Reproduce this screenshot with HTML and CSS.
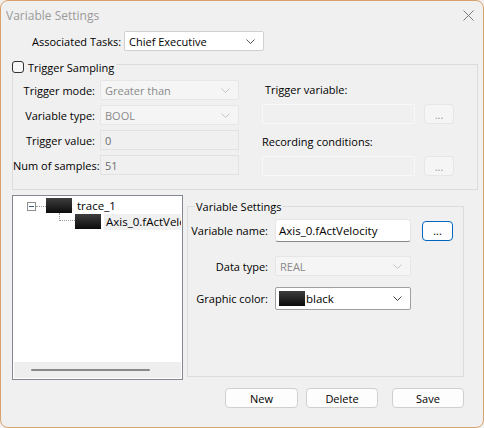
FILE: index.html
```html
<!DOCTYPE html>
<html>
<head>
<meta charset="utf-8">
<title>Variable Settings</title>
<link rel="stylesheet" href="styles.css">
</head>
<body>
<div class="window">
  <div class="titlebar">
    <span class="title">Variable Settings</span>
    <svg class="close" width="11" height="11" viewBox="0 0 11 11"><path d="M0.5 0.5L10.5 10.5M10.5 0.5L0.5 10.5" stroke="#7a7a7a" stroke-width="1" fill="none"/></svg>
  </div>

  <div class="assoc">
    <span class="assoc-label">Associated Tasks:</span>
    <div class="select task-select">
      <span>Chief Executive</span>
      <svg class="chev" width="9" height="5" viewBox="0 0 9 5"><path d="M0.5 0.5L4.5 4.5L8.5 0.5" stroke="#555" fill="none"/></svg>
    </div>
  </div>

  <fieldset class="group trigger">
    <legend><span class="legend-inner"><span class="checkbox"></span>Trigger Sampling</span></legend>
    <div class="trigger-body">
      <div class="form-grid">
        <span class="lbl">Trigger mode:</span>
        <div class="select disabled"><span>Greater than</span><svg class="chev" width="9" height="5" viewBox="0 0 9 5"><path d="M0.5 0.5L4.5 4.5L8.5 0.5" stroke="#c4c4c4" fill="none"/></svg></div>
        <span class="lbl">Variable type:</span>
        <div class="select disabled"><span>BOOL</span><svg class="chev" width="9" height="5" viewBox="0 0 9 5"><path d="M0.5 0.5L4.5 4.5L8.5 0.5" stroke="#c4c4c4" fill="none"/></svg></div>
        <span class="lbl">Trigger value:</span>
        <div class="input disabled">0</div>
        <span class="lbl">Num of samples:</span>
        <div class="input disabled">51</div>
      </div>
      <div class="side">
        <div class="side-label first">Trigger variable:</div>
        <div class="browse-row">
          <div class="input side-input"></div>
          <div class="dots disabled">...</div>
        </div>
        <div class="side-label">Recording conditions:</div>
        <div class="browse-row">
          <div class="input side-input"></div>
          <div class="dots disabled">...</div>
        </div>
      </div>
    </div>
  </fieldset>

  <div class="lower">
    <div class="tree">
      <div class="tree-list">
        <div class="tree-row root">
          <span class="expander"><span class="minus"></span></span>
          <span class="hline"></span>
          <span class="swatch"></span>
          <span class="node-text">trace_1</span>
        </div>
        <div class="tree-row child">
          <span class="elbow"></span>
          <span class="swatch"></span>
          <span class="node-text selected">Axis_0.fActVelocity</span>
        </div>
      </div>
      <div class="hscroll"><span class="thumb"></span></div>
    </div>

    <fieldset class="group varset">
      <legend class="var-legend">Variable Settings</legend>
      <div class="vrow row-name">
        <span class="vlbl">Variable name:</span>
        <div class="text-input">Axis_0.fActVelocity</div>
        <div class="dots focused">...</div>
      </div>
      <div class="vrow row-type">
        <span class="vlbl">Data type:</span>
        <div class="select disabled vselect"><span>REAL</span><svg class="chev" width="9" height="5" viewBox="0 0 9 5"><path d="M0.5 0.5L4.5 4.5L8.5 0.5" stroke="#c4c4c4" fill="none"/></svg></div>
      </div>
      <div class="vrow row-color">
        <span class="vlbl">Graphic color:</span>
        <div class="select color-select">
          <span class="color-val"><span class="swatch"></span>black</span>
          <svg class="chev" width="9" height="5" viewBox="0 0 9 5"><path d="M0.5 0.5L4.5 4.5L8.5 0.5" stroke="#444" fill="none"/></svg>
        </div>
      </div>
    </fieldset>
  </div>

  <div class="actions">
    <button class="btn btn-new">New</button>
    <button class="btn btn-delete">Delete</button>
    <button class="btn btn-save">Save</button>
  </div>
</div>
</body>
</html>
```

FILE: styles.css
```css
html, body {
  margin: 0;
  padding: 0;
  background: #f0f0f0;
}
body {
  font-family: "Open Sans", "Noto Sans", sans-serif;
  font-size: 11px;
  color: #000;
}
.window {
  width: 484px;
  height: 428px;
  box-sizing: border-box;
  border: 1px solid #d9a26c;
  border-radius: 8px;
  background: #f0f0f0;
  display: flex;
  flex-direction: column;
  overflow: hidden;
}
.titlebar {
  height: 28px;
  display: flex;
  align-items: center;
  justify-content: space-between;
  padding: 0 9px 0 5px;
  flex: none;
}
.title {
  font-size: 12px;
  color: #9b9b9b;
}
.assoc {
  display: flex;
  align-items: center;
  height: 20px;
  margin-top: 2px;
  padding-left: 31px;
  flex: none;
}
.assoc-label {
  width: 86px;
  text-align: right;
  white-space: nowrap;
  margin-right: 6px;
}
.select {
  box-sizing: border-box;
  height: 20px;
  display: flex;
  align-items: center;
  justify-content: space-between;
  padding: 0 8px 0 4px;
  background: #fff;
  border: 1px solid #d0d0d0;
  border-radius: 2px;
  white-space: nowrap;
}
.task-select {
  width: 140px;
}
.select.disabled {
  background: #f5f5f5;
  border-color: #e6e6e6;
  color: #8a8a8a;
}
.chev {
  flex: none;
  display: block;
}
.group {
  border: 1px solid #dcdcdc;
  min-width: 0;
  margin: 0;
}
.trigger {
  margin: 5px 5px 0 11px;
  padding: 7px 0 13px 0;
  flex: none;
}
.trigger legend {
  padding: 5px 2px 0 0;
  margin-left: -1px;
}
.legend-inner {
  display: flex;
  align-items: center;
  height: 12px;
  gap: 4px;
}
.checkbox {
  width: 12px;
  height: 12px;
  box-sizing: border-box;
  border: 1px solid #333;
  border-radius: 3px;
  background: #f7f7f7;
}
.trigger-body {
  display: flex;
  align-items: flex-start;
}
.form-grid {
  display: grid;
  grid-template-columns: 82px 139px;
  grid-auto-rows: 20px;
  column-gap: 5px;
  row-gap: 5px;
}
.lbl {
  text-align: right;
  align-self: center;
  white-space: nowrap;
}
.input {
  box-sizing: border-box;
  height: 20px;
  display: flex;
  align-items: center;
  padding: 0 4px;
}
.input.disabled {
  background: #f0f0f0;
  border: 1px solid #e2e2e2;
  color: #6d6d6d;
}
.side {
  margin-left: 23px;
  width: 192px;
  padding-top: 3px;
}
.side-label {
  line-height: 14px;
  margin: 11px 0 7px 0;
  white-space: nowrap;
}
.side-label.first {
  margin-top: 0;
  padding-left: 3px;
}
.browse-row {
  display: flex;
  align-items: center;
}
.side-input {
  width: 153px;
  background: #f0f0f0;
  border: 1px solid #f8f8f8;
}
.dots {
  box-sizing: border-box;
  width: 30px;
  height: 20px;
  margin-left: 9px;
  border-radius: 4px;
  display: flex;
  align-items: center;
  justify-content: center;
  line-height: 1;
}
.dots.disabled {
  background: #f5f5f5;
  border: 1px solid #e6e6e6;
  color: #9a9a9a;
}
.dots.focused {
  width: 31px;
  margin-left: 11px;
  background: #fdfdfd;
  border: 1px solid #0067c0;
}

/* lower part */
.lower {
  display: flex;
  align-items: flex-start;
  margin: 5px 0 0 11px;
  flex: none;
}
.tree {
  width: 171px;
  height: 185px;
  box-sizing: border-box;
  border: 1px solid #828790;
  background: #fff;
  padding: 1px;
  display: flex;
  flex-direction: column;
  flex: none;
}
.tree-list {
  flex: 1;
  padding-top: 1px;
  overflow: hidden;
}
.tree-row {
  display: flex;
  align-items: flex-start;
  height: 16px;
}
.root {
  padding-left: 13px;
}
.expander {
  width: 9px;
  height: 9px;
  box-sizing: border-box;
  border: 1px solid #8e8e8e;
  margin-top: 4px;
  display: flex;
  align-items: center;
  justify-content: center;
  flex: none;
}
.minus {
  width: 5px;
  height: 1px;
  background: #3c5a8c;
}
.hline {
  width: 10px;
  margin-top: 8px;
  border-top: 1px dotted #9a9a9a;
  flex: none;
}
.swatch {
  width: 26px;
  height: 15px;
  background: linear-gradient(#3e3e3e, #0c0c0c);
  flex: none;
}
.node-text {
  line-height: 16px;
  margin-left: 5px;
  white-space: nowrap;
  font-size: 11.5px;
}
.child {
  padding-left: 45px;
}
.elbow {
  width: 16px;
  height: 8px;
  box-sizing: border-box;
  margin-top: -1px;
  border-left: 1px dotted #9a9a9a;
  border-bottom: 1px dotted #9a9a9a;
  flex: none;
}
.node-text.selected {
  margin-left: 3px;
  padding-left: 2px;
  background: #f0f0f0;
  flex: 1;
  min-width: 0;
  overflow: hidden;
}
.hscroll {
  height: 16px;
  background: #eeeeee;
  display: flex;
  align-items: center;
  flex: none;
}
.thumb {
  width: 119px;
  height: 2px;
  margin-left: 17px;
  border-radius: 1px;
  background: #8a8a8a;
}

.varset {
  box-sizing: border-box;
  width: 277px;
  height: 178px;
  margin: 4px 0 0 4px;
  padding: 5px 0 0 0;
}
.var-legend {
  margin-left: 7px;
  padding: 0 1px;
  line-height: 15px;
}
.vrow {
  display: flex;
  align-items: center;
  height: 23px;
}
.vlbl {
  width: 80px;
  margin-right: 7px;
  text-align: right;
  white-space: nowrap;
}
.text-input {
  box-sizing: border-box;
  width: 136px;
  height: 23px;
  background: #fff;
  border: 1px solid #e5e5e5;
  border-bottom-color: #868686;
  border-radius: 3px;
  padding: 0 3px;
  display: flex;
  align-items: center;
  white-space: nowrap;
  overflow: hidden;
  font-size: 11.5px;
}
.row-type {
  height: 20px;
  margin-top: 14px;
}
.vselect {
  width: 136px;
}
.row-color {
  margin-top: 11px;
}
.color-select {
  width: 136px;
  height: 23px;
  border-color: #a0a0a0;
  padding-left: 3px;
}
.color-val {
  display: flex;
  align-items: center;
  gap: 1px;
  font-size: 11.5px;
}

/* buttons */
.actions {
  display: flex;
  justify-content: flex-end;
  margin-top: 8px;
  padding-right: 19px;
  flex: none;
}
.btn {
  box-sizing: border-box;
  width: 72px;
  height: 20px;
  padding: 0;
  font: inherit;
  color: #000;
  background: #fdfdfd;
  border: 1px solid #d0d0d0;
  border-radius: 4px;
}
.btn-new {
  width: 73px;
}
.btn-delete {
  margin-left: 8px;
}
.btn-save {
  margin-left: 14px;
}
```
